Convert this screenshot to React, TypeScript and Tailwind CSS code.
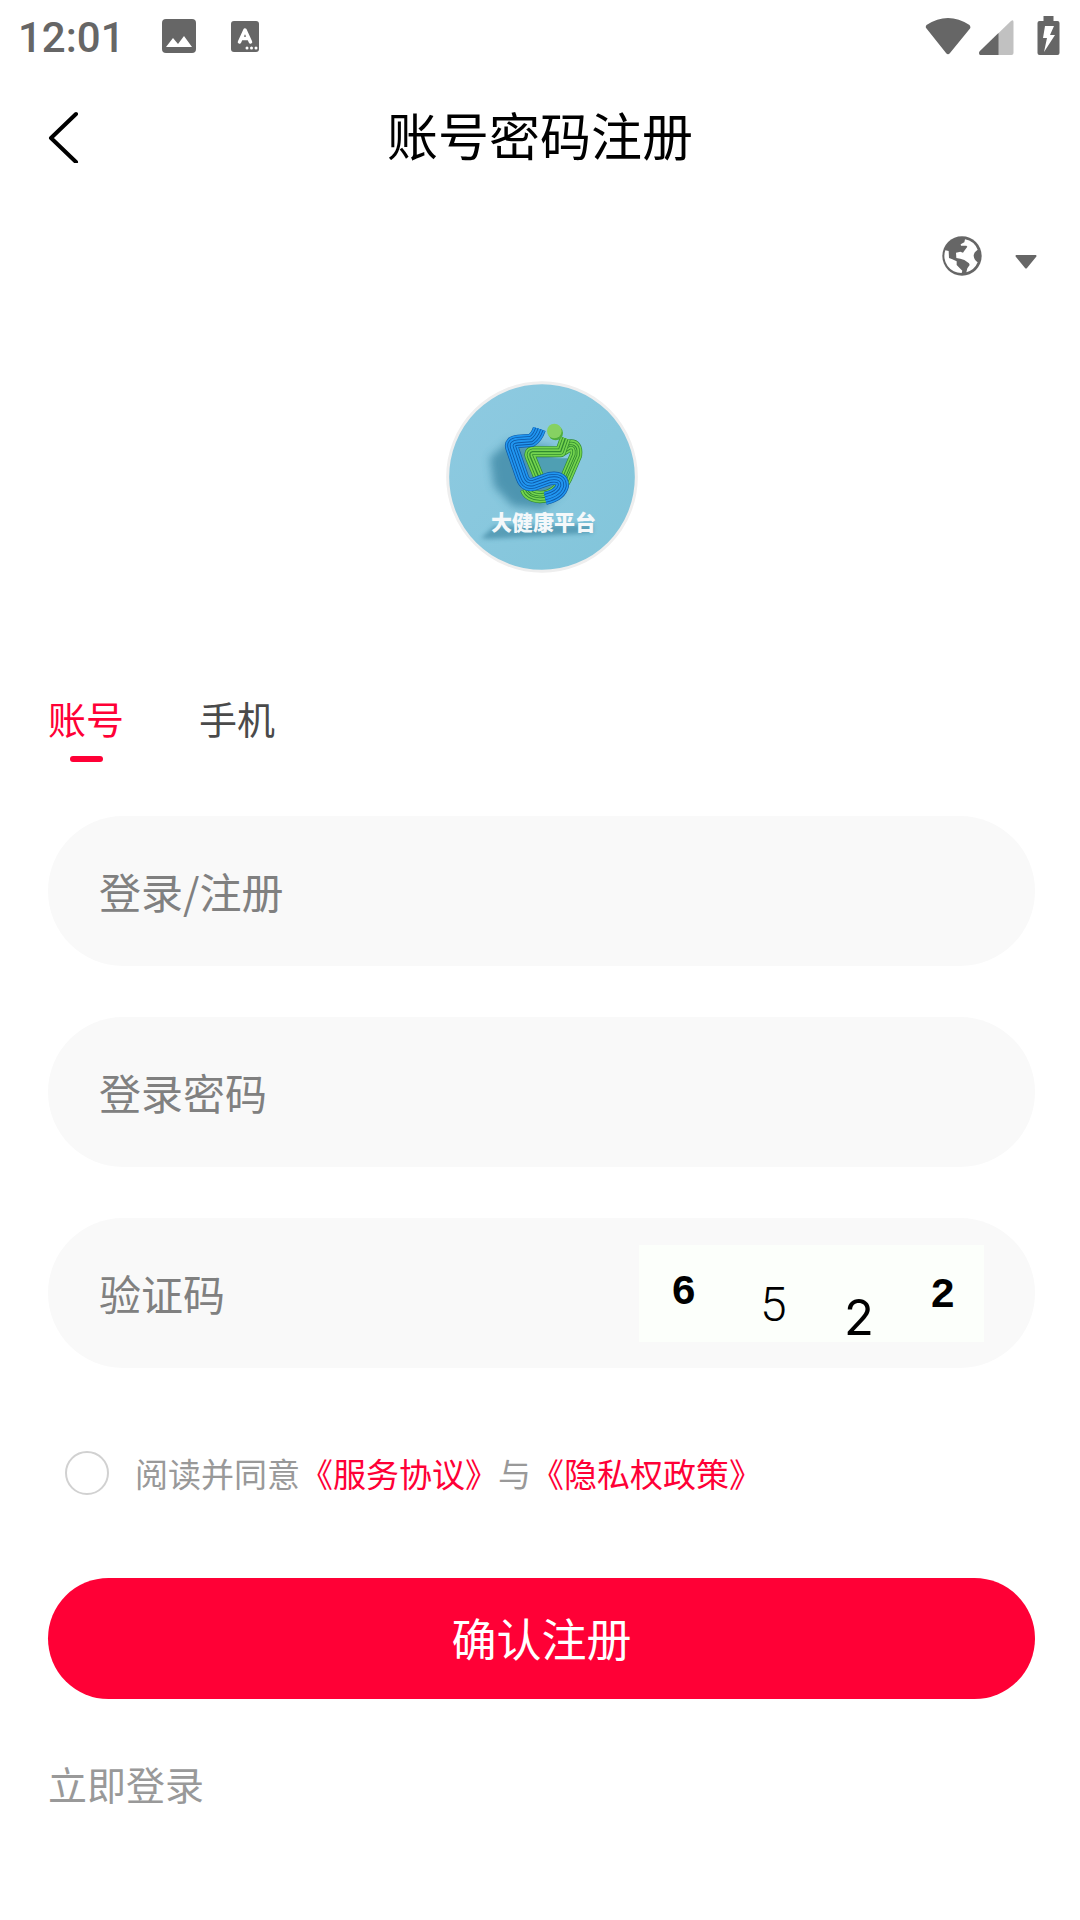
import { useState } from "react";

const fieldClass =
  "min-w-0 flex-1 bg-transparent text-[42px] leading-[60px] text-[#333333] outline-none placeholder:text-[#808080]";

function StatusBar() {
  return (
    <div className="flex h-18 items-center justify-between pr-5 pl-[18px] text-[#666666]">
      <div className="flex items-center">
        <span className="w-36 pt-[3px] font-['Roboto'] text-[42px] leading-[48px] font-medium">12:01</span>
        <svg width="34" height="34" viewBox="0 0 34 34" aria-hidden="true">
          <rect width="34" height="34" rx="4" fill="currentColor" />
          <path d="M4 28l7-9 5 6 6-8 8 11z" fill="#fff" />
        </svg>
        <svg className="ml-[35px]" width="28" height="31" viewBox="0 0 28 31" aria-hidden="true">
          <rect width="28" height="31" rx="3" fill="currentColor" />
          <path d="M8.500 21L14 9L19.500 21M10.500 17.500h7" fill="none" stroke="#fff" strokeWidth="3.500" strokeLinecap="round" strokeLinejoin="round" />
          <g fill="#fff">
            <circle cx="16" cy="27" r="1.500" />
            <circle cx="20.500" cy="27" r="1.500" />
            <circle cx="25" cy="27" r="1.500" />
          </g>
        </svg>
      </div>
      <svg width="135" height="40" viewBox="0 0 135 40" aria-hidden="true">
        <path d="M1.500 9Q0 11 1.500 12.500L21 37Q23 39.500 25 37L45 12.500Q46 11 44.500 9Q23 -5 1.500 9z" fill="currentColor" />
        <path d="M55 39Q53 37 55 35L86 5Q88.500 3 88.500 6V37Q88.500 39 86.500 39z" fill="#c1c1c1" />
        <path d="M55 39Q53 37 55 35L73.500 17V39z" fill="currentColor" />
        <path d="M118.500 0h10v5h4q2 0 2 2v30q0 2-2 2h-18q-2 0-2-2V7q0-2 2-2h4z" fill="currentColor" />
        <path d="M120 10h9l-4 9h5l-11 17 3-14h-4z" fill="#fff" />
      </svg>
    </div>
  );
}

/* A ribbon of parallel cords: one path stroked with ever narrower, alternating shades. */
function Ribbon({ d, width, shades }: { d: string; width: number; shades: [string, string] }) {
  const layers: { w: number; c: string }[] = [];
  for (let w = width, i = 0; w > 1; w -= i % 2 ? 5 : 10, i++) {
    layers.push({ w, c: shades[i % 2] });
  }
  return (
    <g fill="none" strokeLinejoin="round">
      <path d={d} stroke={shades[1]} strokeWidth={width + 4} />
      {layers.map(({ w, c }) => (
        <path key={w} d={d} stroke={c} strokeWidth={w} />
      ))}
    </g>
  );
}

function Emblem() {
  const green: [string, string] = ["#74d34e", "#2f8a30"];
  const blue: [string, string] = ["#2196f0", "#0d57a5"];
  return (
    <svg className="size-[192px]" viewBox="0 0 576 576" role="img" aria-label="大健康平台">
      <defs>
        <linearGradient id="sky" x1="0" y1="0" x2="1" y2="1">
          <stop offset="0" stopColor="#8ecae1" />
          <stop offset="1" stopColor="#82c5da" />
        </linearGradient>
        <filter id="soft" x="-40%" y="-40%" width="180%" height="180%">
          <feGaussianBlur stdDeviation="12" />
        </filter>
        <filter id="tight" x="-20%" y="-40%" width="140%" height="180%">
          <feGaussianBlur stdDeviation="6" />
        </filter>
      </defs>
      <circle cx="288" cy="288" r="283" fill="url(#sky)" stroke="#eeeeee" strokeWidth="9" />
      <path d="M190 180L132 230L144 315L200 375L290 385L350 330L320 200z" fill="#34809e" opacity=".7" filter="url(#soft)" />
      <path d="M105 472L145 435L440 430L440 456L300 464L130 474z" fill="#337b98" opacity=".55" filter="url(#tight)" />
      <g transform="translate(132 102)">
        <path d="M130 130H245L205 190L150 185z" fill="#4f9fb3" />
        <Ribbon d="M214 106L238 92Q262 88 258 120L228 190Q200 246 150 246Q116 244 108 222" width={33} shades={green} />
        <Ribbon d="M226 70L212 110H128Q116 112 121 125L150 195" width={29} shades={green} />
        <Ribbon d="M148 42Q140 66 124 76L84 79Q60 81 66 98L97 188Q106 213 130 208L178 191Q218 184 217 212Q210 240 166 250" width={36} shades={blue} />
        <circle cx="197" cy="54" r="22" fill="#4fae3c" />
        <circle cx="193" cy="48" r="22" fill="#86d162" />
      </g>
      <text x="135" y="448" fontFamily="Noto Sans CJK SC, sans-serif" fontSize="63" fontWeight="900" fill="#f4f8fa">大健康平台</text>
    </svg>
  );
}

function Captcha() {
  return (
    <svg className="h-[97px] w-[345px] shrink-0 overflow-visible" viewBox="0 0 345 97" role="img" aria-label="6522">
      <rect width="345" height="97" fill="#fcfffb" />
      <g fill="#000">
        <text x="32" y="59" fontFamily="Liberation Mono, monospace" fontSize="42" fontWeight="700">6</text>
        <text x="121" y="76" fontFamily="Roboto, sans-serif" fontSize="48" fontWeight="300">5</text>
        <text x="205" y="90" fontFamily="Inter, sans-serif" fontSize="49">2</text>
        <text x="291" y="62" fontFamily="Liberation Mono, monospace" fontSize="42" fontWeight="700">2</text>
      </g>
    </svg>
  );
}

export default function App() {
  const [tab, setTab] = useState(0);
  return (
    <div className="min-h-screen bg-white font-['Noto_Sans_CJK_SC',sans-serif]">
      <StatusBar />
      <header className="grid h-[128px] grid-cols-[1fr_auto_1fr] items-center px-12">
        <button type="button" aria-label="返回" className="w-8">
          <svg width="32" height="54" viewBox="0 0 32 54" fill="none" stroke="#000" strokeWidth="4" strokeLinecap="round" strokeLinejoin="round" aria-hidden="true">
            <path d="M28 5L3 29L28 53" />
          </svg>
        </button>
        <h1 className="pb-1 text-[51px] leading-[74px] text-black">账号密码注册</h1>
      </header>

      <div className="flex h-28 justify-end pr-[43px] text-[#666666]">
        <button type="button" aria-label="选择语言" className="flex h-28 items-center gap-[33px]">
          <svg width="40" height="40" viewBox="17 18 120 120" aria-hidden="true">
            <circle cx="77" cy="78" r="59" fill="currentColor" />
            <path d="M27 61L37 63L38 84L48 88L61 94L61 105L72 116L78 122L76 129A51 51 0 0 1 27 61z" fill="#fff" />
            <path d="M86 28A51 51 0 0 1 124 59Q112 67 112 77Q113 89 124 97A51 51 0 0 1 90 127L93 115L100 105L98 100L84 90L72 86L60 84L59 68L72 65L80 68L84 62L93 50L90 47L74 47L73 43L84 37z" fill="#fff" />
          </svg>
          <svg className="mt-3" width="22" height="14" viewBox="0 0 22 14" aria-hidden="true">
            <path d="M1 0h20q1 1 0 2L12 13q-1 1-2 0L1 2q-1-1 0-2z" fill="currentColor" />
          </svg>
        </button>
      </div>

      <main className="pr-[45px] pl-12">
        <div className="mt-[69px] flex justify-center">
          <Emblem />
        </div>

        <div role="tablist" className="mt-[117px] flex gap-[75px]">
          {["账号", "手机"].map((name, i) => (
            <button
              key={name}
              type="button"
              role="tab"
              aria-selected={tab === i}
              onClick={() => setTab(i)}
              className={`flex flex-col items-center text-[38px] leading-[56px] ${tab === i ? "text-[#ff0036]" : "text-[#4a4a4a]"}`}
            >
              {name}
              <span className={`mt-[10px] h-[6px] w-[33px] rounded-full ${tab === i ? "bg-[#ff0036]" : ""}`} />
            </button>
          ))}
        </div>

        <form className="mt-[54px]" onSubmit={(e) => e.preventDefault()}>
          <div className="flex flex-col gap-[51px]">
            <div className="flex h-[150px] items-center rounded-full bg-[#f9f9f9] px-[51px]">
              <input type="text" aria-label="登录/注册" placeholder="登录/注册" className={fieldClass} />
            </div>
            <div className="flex h-[150px] items-center rounded-full bg-[#f9f9f9] px-[51px]">
              <input type="password" aria-label="登录密码" placeholder="登录密码" className={fieldClass} />
            </div>
            <div className="flex h-[150px] items-center rounded-full bg-[#f9f9f9] px-[51px]">
              <input type="text" aria-label="验证码" placeholder="验证码" className={fieldClass} />
              <Captcha />
            </div>
          </div>

          <div className="mt-[81px] flex h-12 items-center pl-[17px] text-[33px] leading-[48px] text-[#999999]">
            <input id="agree" type="checkbox" className="size-11 appearance-none rounded-full border-2 border-[#d1d1d1] checked:border-[#ff0036] checked:bg-[#ff0036]" />
            <label htmlFor="agree" className="ml-[26px]">阅读并同意</label>
            <a href="#terms" className="text-[#ff0036]">《服务协议》</a>
            <span>与</span>
            <a href="#privacy" className="text-[#ff0036]">《隐私权政策》</a>
          </div>

          <button type="submit" className="mt-[81px] h-[121px] w-full rounded-full bg-[#ff0036] pb-[2px] text-[45px] leading-[66px] text-white">
            确认注册
          </button>
        </form>

        <a href="#login" className="mt-14 inline-block text-[39px] leading-[56px] text-[#999999]">立即登录</a>
      </main>
    </div>
  );
}
